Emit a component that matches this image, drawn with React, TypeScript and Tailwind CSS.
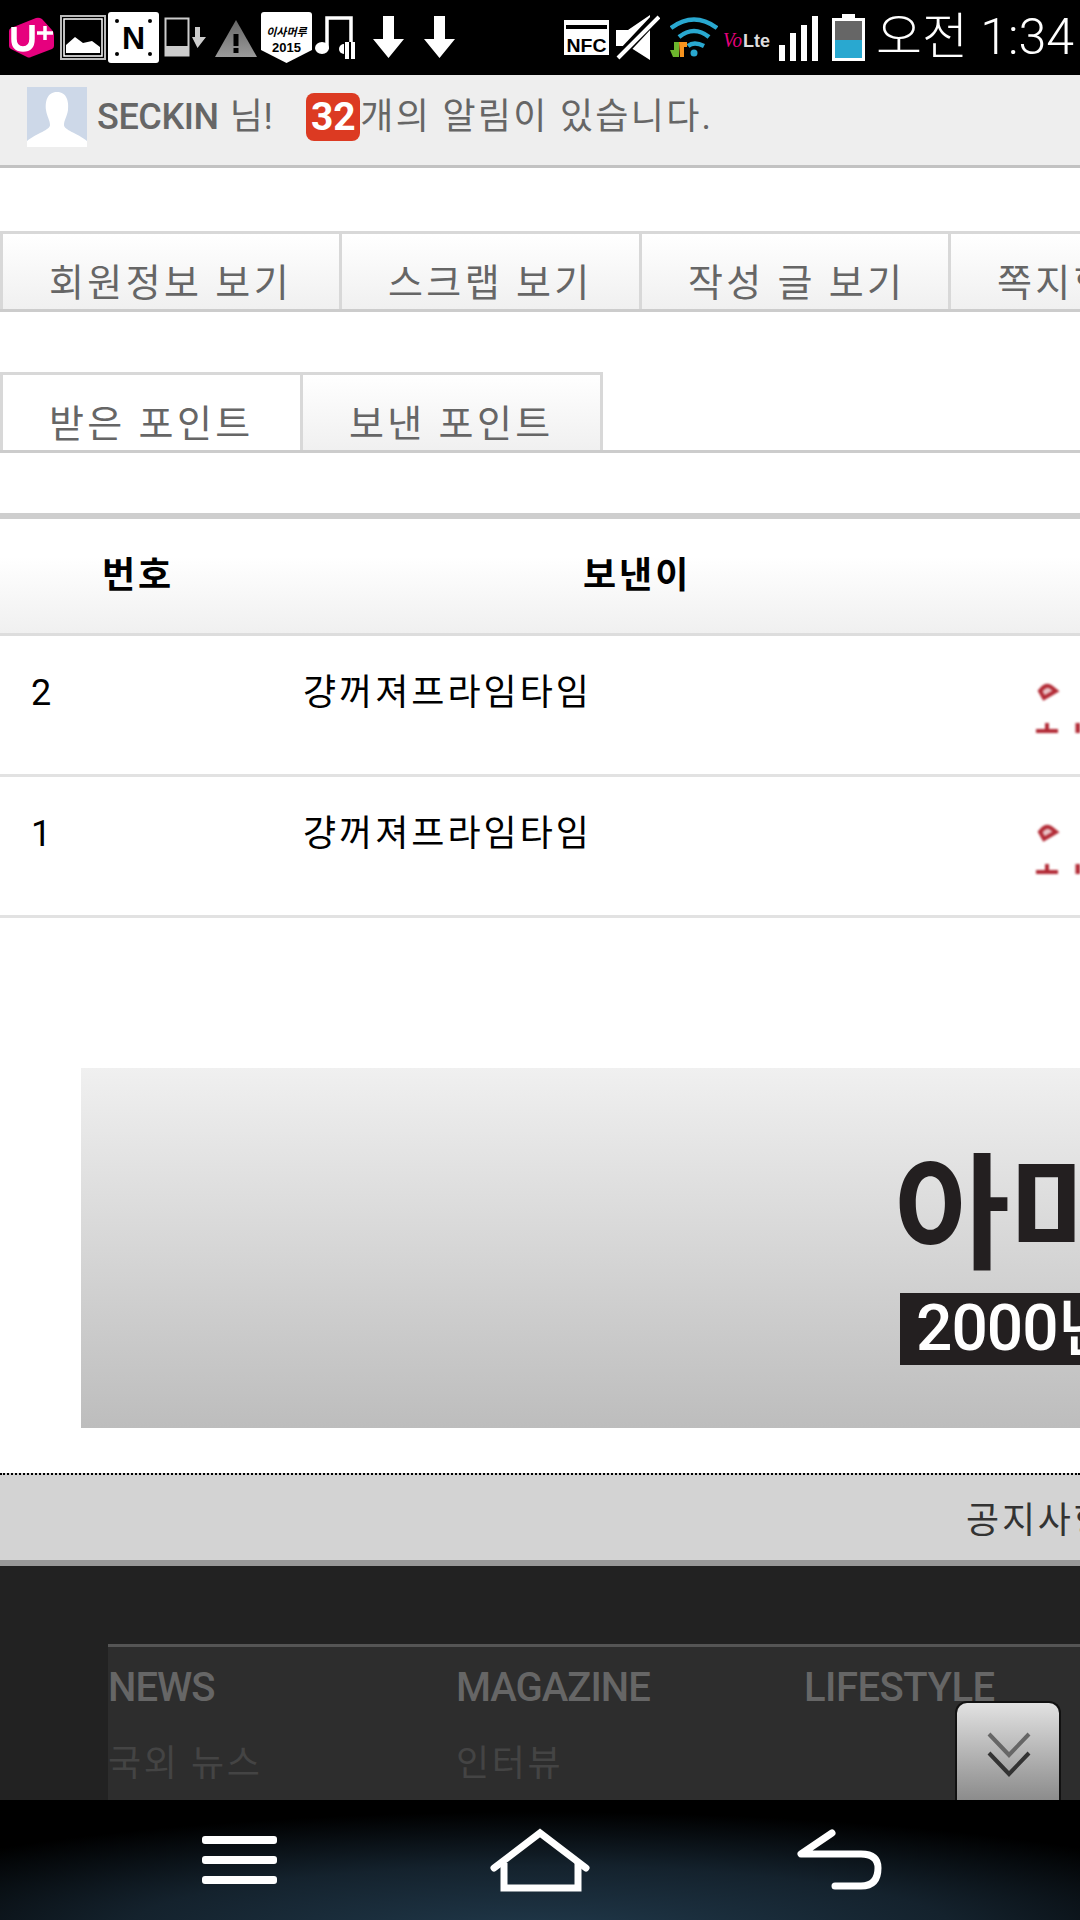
const tabRowOne = [
  { label: "회원정보 보기", width: "w-[337px]" },
  { label: "스크랩 보기", width: "w-[300px]" },
  { label: "작성 글 보기", width: "w-[309px]" },
  { label: "쪽지함 보기", width: "w-[300px]" },
];

const rows = [
  { no: "2", name: "걍꺼져프라임타임" },
  { no: "1", name: "걍꺼져프라임타임" },
];

function StatusLeft() {
  return (
    <div className="flex pl-[9px]">
      {/* U+ */}
      <svg className="h-[75px] w-[45px]" viewBox="0 0 45 75">
        <path d="M2 28 L27 18 Q30 17 33 19 L43 30 Q45 32 45 35 V46 Q45 48 43 49 L22 57 Q20 58 18 57 L2 49 Q0 48 0 46 V31 Q0 29 2 28 Z" fill="#e6007e" />
        <path d="M5 27 V39 Q5 49 14 49 Q23 49 23 39 V25" fill="none" stroke="#fff" strokeWidth="5.5" />
        <path d="M28 33 H44 M36 26 V40" stroke="#fff" strokeWidth="3.5" />
      </svg>
      {/* picture */}
      <svg className="ml-[6px] h-[75px] w-[46px]" viewBox="0 0 46 75">
        <rect x="1" y="16" width="44" height="43" fill="none" stroke="#bbb" strokeWidth="2" />
        <rect x="4" y="19" width="38" height="37" fill="#000" stroke="#fff" strokeWidth="1.5" />
        <path d="M6 53 V45 L15 37 L23 43 L32 41 L40 47 V53 Z" fill="#fff" />
      </svg>
      {/* N */}
      <svg className="ml-[2px] h-[75px] w-[51px]" viewBox="0 0 51 75">
        <rect x="0" y="12" width="51" height="51" rx="3" fill="#fff" />
        <circle cx="9" cy="21" r="2" fill="#000" />
        <circle cx="42" cy="21" r="2" fill="#000" />
        <circle cx="9" cy="54" r="2" fill="#000" />
        <circle cx="42" cy="54" r="2" fill="#000" />
        <text x="25.5" y="49" textAnchor="middle" fontFamily="Liberation Sans" fontWeight="700" fontSize="32" fill="#000">N</text>
      </svg>
      {/* device download */}
      <svg className="ml-[5px] h-[75px] w-[43px]" viewBox="0 0 43 75">
        <rect x="1.5" y="18.5" width="23" height="37" fill="none" stroke="#ccc" strokeWidth="2" />
        <rect x="1" y="46" width="24" height="10" fill="#ccc" />
        <path d="M31 27 H36 V37 H42 L33.5 48 L28 37 H31 Z" fill="#ccc" />
      </svg>
      {/* warning */}
      <svg className="ml-[8px] h-[75px] w-[42px]" viewBox="0 0 42 75">
        <defs>
          <linearGradient id="warn" x1="0" y1="0" x2="0" y2="1">
            <stop offset="0" stopColor="#666" />
            <stop offset="1" stopColor="#9a9a9a" />
          </linearGradient>
        </defs>
        <path d="M21 20 L42 57 H0 Z" fill="url(#warn)" />
        <rect x="18.5" y="34" width="5" height="12" fill="#000" />
        <rect x="18.5" y="48" width="5" height="5" fill="#000" />
      </svg>
      {/* event badge */}
      <svg className="ml-[4px] h-[75px] w-[51px]" viewBox="0 0 51 75">
        <path d="M3 12 H48 Q51 12 51 15 V50 L25.5 63 L0 50 V15 Q0 12 3 12 Z" fill="#fff" />
        <text x="25.5" y="36" textAnchor="middle" fontFamily="Noto Sans CJK KR" fontStyle="italic" fontWeight="700" fontSize="11" fill="#000">이사머루</text>
        <text x="25.5" y="52" textAnchor="middle" fontFamily="Liberation Sans" fontWeight="700" fontSize="13" fill="#000">2015</text>
      </svg>
      {/* music */}
      <svg className="ml-[3px] h-[75px] w-[40px]" viewBox="0 0 40 75">
        <path d="M12 49 V18 H36 V42" fill="none" stroke="#fff" strokeWidth="3.5" />
        <ellipse cx="7" cy="48" rx="7" ry="6" fill="#fff" />
        <path d="M29 44 A5 5 0 0 0 29 54 Z" fill="#fff" />
        <rect x="30" y="42" width="4" height="17" fill="#fff" />
        <rect x="36" y="42" width="4" height="17" fill="#fff" />
      </svg>
      {/* downloads */}
      <svg className="ml-[18px] h-[75px] w-[31px]" viewBox="0 0 31 75">
        <path d="M10 16 H21 V39 H31 L15.5 58 L0 39 H10 Z" fill="#fff" />
      </svg>
      <svg className="ml-[20px] h-[75px] w-[31px]" viewBox="0 0 31 75">
        <path d="M10 16 H21 V39 H31 L15.5 58 L0 39 H10 Z" fill="#fff" />
      </svg>
    </div>
  );
}

function StatusRight() {
  return (
    <div className="ml-auto flex items-center pr-[6px]">
      {/* NFC */}
      <svg className="h-[75px] w-[45px]" viewBox="0 0 45 75">
        <rect x="0" y="20" width="45" height="35" fill="#fff" />
        <rect x="2" y="25" width="41" height="4" fill="#000" />
        <text x="22.5" y="52" textAnchor="middle" fontFamily="Liberation Sans" fontWeight="700" fontSize="19" fill="#000" textLength="40" lengthAdjust="spacingAndGlyphs">NFC</text>
      </svg>
      {/* muted */}
      <svg className="ml-[7px] h-[75px] w-[44px]" viewBox="0 0 44 75">
        <path d="M0 30 H12 L34 15 V60 L12 46 H0 Z" fill="#fff" />
        <path d="M-2 62 L44 13" stroke="#000" strokeWidth="9" />
        <path d="M2 58 L43 17" stroke="#fff" strokeWidth="4" />
      </svg>
      {/* wifi */}
      <svg className="ml-[10px] h-[75px] w-[48px]" viewBox="0 0 48 75">
        <path d="M1 28 Q24 11 47 28" fill="none" stroke="#29a8d0" strokeWidth="4.5" />
        <path d="M9 37 Q24 25 39 37" fill="none" stroke="#29a8d0" strokeWidth="4.5" />
        <path d="M18 46 Q24 41 34 46" fill="none" stroke="#29a8d0" strokeWidth="4.5" />
        <circle cx="24" cy="53" r="3.5" fill="#29a8d0" />
        <path d="M0 50 H4 V42 H9 V57 H3 Z" fill="#6cb52d" />
        <path d="M9 42 H17 V47 H14 V57 H10 Z" fill="#f7931e" />
      </svg>
      {/* volte */}
      <svg className="ml-[5px] h-[75px] w-[47px]" viewBox="0 0 47 75">
        <text x="0" y="47" fontFamily="Liberation Serif" fontStyle="italic" fontSize="21" fill="#e6007e" textLength="19" lengthAdjust="spacingAndGlyphs">Vo</text>
        <text x="20" y="47" fontFamily="Liberation Sans" fontWeight="700" fontSize="19" fill="#ddd" textLength="27" lengthAdjust="spacingAndGlyphs">Lte</text>
      </svg>
      {/* signal */}
      <svg className="ml-[9px] h-[75px] w-[39px]" viewBox="0 0 39 75">
        <rect x="0" y="45" width="6" height="16" fill="#fff" />
        <rect x="11" y="33" width="6" height="28" fill="#fff" />
        <rect x="22" y="25" width="6" height="36" fill="#fff" />
        <rect x="33" y="16" width="6" height="45" fill="#fff" />
      </svg>
      {/* battery */}
      <svg className="ml-[14px] h-[75px] w-[33px]" viewBox="0 0 33 75">
        <path d="M10 14 H23 V18 H33 V61 H0 V18 H10 Z" fill="#fff" />
        <rect x="3" y="21" width="27" height="37" fill="#666" />
        <rect x="3" y="40" width="27" height="18" fill="#29a8d0" />
      </svg>
      <span className="ml-[11px] whitespace-nowrap text-[50px] leading-[75px] font-light text-white">오전 1:34</span>
    </div>
  );
}

function Tabs({ children }: { children: React.ReactNode }) {
  return <div className="flex h-[81px] border-b-[3px] border-[#ccc]">{children}</div>;
}

function TabItem({ label, width, active, first }: { label: string; width: string; active?: boolean; first?: boolean }) {
  return (
    <div
      className={`${width} shrink-0 border-t-[3px] border-r-[3px] border-[#d8d8d8] ${first ? "border-l-[3px]" : ""} ${
        active ? "bg-white" : "bg-gradient-to-b from-white to-[#f0f0f0]"
      } whitespace-nowrap pl-[46px] pt-[25px] text-[38px] leading-[48px] tracking-[3.4px] text-[#666]`}
    >
      {label}
    </div>
  );
}

function TableRow({ no, name }: { no: string; name: string }) {
  return (
    <div className="flex h-[141px] border-b-[3px] border-[#e2e2e2]">
      <div className="w-[303px] shrink-0 pl-[31px] pt-[32px] text-[36px] leading-[50px] text-black">{no}</div>
      <div className="w-[733px] shrink-0 pt-[32px] text-[36px] leading-[50px] tracking-[3px] text-black">{name}</div>
      <svg className="h-[138px] w-[44px] shrink-0 blur-[0.8px]" viewBox="0 0 44 138">
        <path d="M4 55 Q10 47 15 51 L20 55 L8 62 Z" fill="#e9c4c7" stroke="#b22a35" strokeWidth="4" />
        <path d="M0 95 H22 M11 87 V95" stroke="#b22a35" strokeWidth="4" />
        <path d="M42 87 V97" stroke="#b22a35" strokeWidth="5" />
      </svg>
    </div>
  );
}

export default function App() {
  return (
    <div className="relative flex h-[1920px] w-[1080px] flex-col overflow-hidden bg-white font-[Roboto,'Noto_Sans_CJK_KR',sans-serif]">
      {/* status bar */}
      <div className="flex h-[75px] shrink-0 bg-black">
        <StatusLeft />
        <StatusRight />
      </div>

      <div className="min-h-0 flex-1 overflow-hidden">
        {/* member header */}
        <div className="flex h-[93px] items-start border-b-[3px] border-[#c2c2c2] bg-[#eee] pl-[27px] pt-[12px]">
          <svg className="h-[60px] w-[60px] shrink-0" viewBox="0 0 60 60">
            <rect width="60" height="60" fill="#cdd8e8" />
            <path d="M30 5 C40 5 42 15 41 23 C40 30 37 33 37 38 C37 43 50 46 60 54 V60 H0 V54 C10 46 23 43 23 38 C23 33 20 30 19 23 C18 15 20 5 30 5 Z" fill="#fff" />
          </svg>
          <span className="ml-[10px] whitespace-nowrap pt-[9px] text-[36px] leading-[42px] font-medium tracking-[-0.4px] text-[#666]">SECKIN</span>
          <span className="ml-[11px] whitespace-nowrap pt-[9px] text-[36px] leading-[42px] tracking-[0.6px] text-[#666]">님!</span>
          <span className="ml-[33px] mt-[6px] flex h-[48px] w-[54px] items-center justify-center rounded-lg bg-[#dc3a22] text-[39px] font-bold text-white">32</span>
          <span className="whitespace-nowrap pt-[9px] text-[36px] leading-[42px] tracking-[2.3px] text-[#666]">개의 알림이 있습니다.</span>
        </div>

        {/* tabs */}
        <div className="mt-[63px]">
          <Tabs>
            {tabRowOne.map((tab, i) => (
              <TabItem key={tab.label} label={tab.label} width={i === 0 ? "w-[342px]" : tab.width} first={i === 0} />
            ))}
          </Tabs>
        </div>
        <div className="mt-[60px]">
          <Tabs>
            <TabItem label="받은 포인트" width="w-[303px]" active first />
            <TabItem label="보낸 포인트" width="w-[300px]" />
          </Tabs>
        </div>

        {/* point table */}
        <div className="mt-[60px] border-t-[6px] border-[#cecece]">
          <div className="flex h-[117px] border-b-[3px] border-[#ddd] bg-[linear-gradient(#fff_0,#fff_33%,#f0f0f0_100%)] text-[36px] font-bold text-black">
            <div className="w-[583px] shrink-0 pl-[102px] pt-[32px] leading-[50px] tracking-[3px]">번호</div>
            <div className="pt-[32px] leading-[50px] tracking-[3px]">보낸이</div>
          </div>
          {rows.map((row) => (
            <TableRow key={row.no} no={row.no} name={row.name} />
          ))}
        </div>

        {/* banner */}
        <div className="ml-[81px] mt-[150px] flex h-[360px] overflow-hidden bg-gradient-to-b from-[#f0f0f0] to-[#bdbdbd] pl-[819px] pt-[72px]">
          <div className="shrink-0">
            <div className="ml-[-6px] whitespace-nowrap text-[126px] leading-[153px] font-bold text-[#231f20]">아마</div>
            <div className="h-[72px] whitespace-nowrap bg-[#231f20] pl-[16px] text-[64px] leading-[72px] font-medium tracking-[-1px] text-white">2000년</div>
          </div>
        </div>

        {/* notice */}
        <div className="mt-[45px] h-[93px] border-t-2 border-b-[6px] border-dotted border-t-black border-b-[#999] [border-bottom-style:solid] bg-[#d3d3d3] pl-[966px] pt-[24px] text-[36px] leading-[44px] tracking-[2.8px] whitespace-nowrap text-[#333]">
          공지사항
        </div>

        {/* footer */}
        <div className="h-[240px] bg-[#222] pl-[108px] pt-[78px]">
          <div className="h-full border-t-[3px] border-[#555] bg-[#2d2d2d] pt-[17px]">
            <div className="flex">
              <div className="w-[348px] shrink-0">
                <div className="text-[40px] leading-[48px] font-medium tracking-[-1px] text-[#666]">NEWS</div>
                <div className="mt-[30px] text-[36px] leading-[44px] tracking-[2.6px] text-[#444]">국외 뉴스</div>
              </div>
              <div className="w-[348px] shrink-0">
                <div className="text-[40px] leading-[48px] font-medium tracking-[-1px] text-[#666]">MAGAZINE</div>
                <div className="mt-[30px] text-[36px] leading-[44px] tracking-[2.6px] text-[#444]">인터뷰</div>
              </div>
              <div className="text-[40px] leading-[48px] font-medium tracking-[-0.5px] text-[#666]">LIFESTYLE</div>
            </div>
          </div>
        </div>
      </div>

      {/* navigation bar */}
      <div className="flex h-[120px] shrink-0 bg-[radial-gradient(ellipse_70%_100%_at_50%_110%,#20384a_0%,#14222d_55%,#000_100%)] pl-[202px]">
        <svg className="h-[120px] w-[75px]" viewBox="0 0 75 120">
          <rect x="0" y="36" width="75" height="8" rx="3" fill="#fff" />
          <rect x="0" y="56" width="75" height="8" rx="3" fill="#fff" />
          <rect x="0" y="76" width="75" height="8" rx="3" fill="#fff" />
        </svg>
        <svg className="ml-[213px] h-[120px] w-[100px]" viewBox="0 0 100 120">
          <path d="M4 68 L50 33 L96 68" fill="none" stroke="#fff" strokeWidth="7" strokeLinecap="round" strokeLinejoin="miter" />
          <path d="M14 63 V88 H88 V63" fill="none" stroke="#fff" strokeWidth="7" />
        </svg>
        <svg className="ml-[207px] h-[120px] w-[85px]" viewBox="0 0 85 120">
          <path d="M35 33 L4 54 H64 Q81 54 81 68 Q81 86 64 86 H38" fill="none" stroke="#fff" strokeWidth="7" strokeLinecap="round" strokeLinejoin="round" />
        </svg>
      </div>

      {/* scroll down button */}
      <div className="absolute left-[955px] top-[1701px] h-[99px] w-[106px] overflow-hidden rounded-t-xl border-x-2 border-t-2 border-[#111] bg-gradient-to-b from-[#e2e2e2] to-[#8c8c8c]">
        <svg className="absolute left-[30px] top-[28px] h-[46px] w-[44px]" viewBox="0 0 44 46">
          <path d="M2 3 L22 24 L42 3" fill="none" stroke="#666" strokeWidth="4" />
          <path d="M2 22 L22 43 L42 22" fill="none" stroke="#333" strokeWidth="4" />
        </svg>
      </div>
    </div>
  );
}
